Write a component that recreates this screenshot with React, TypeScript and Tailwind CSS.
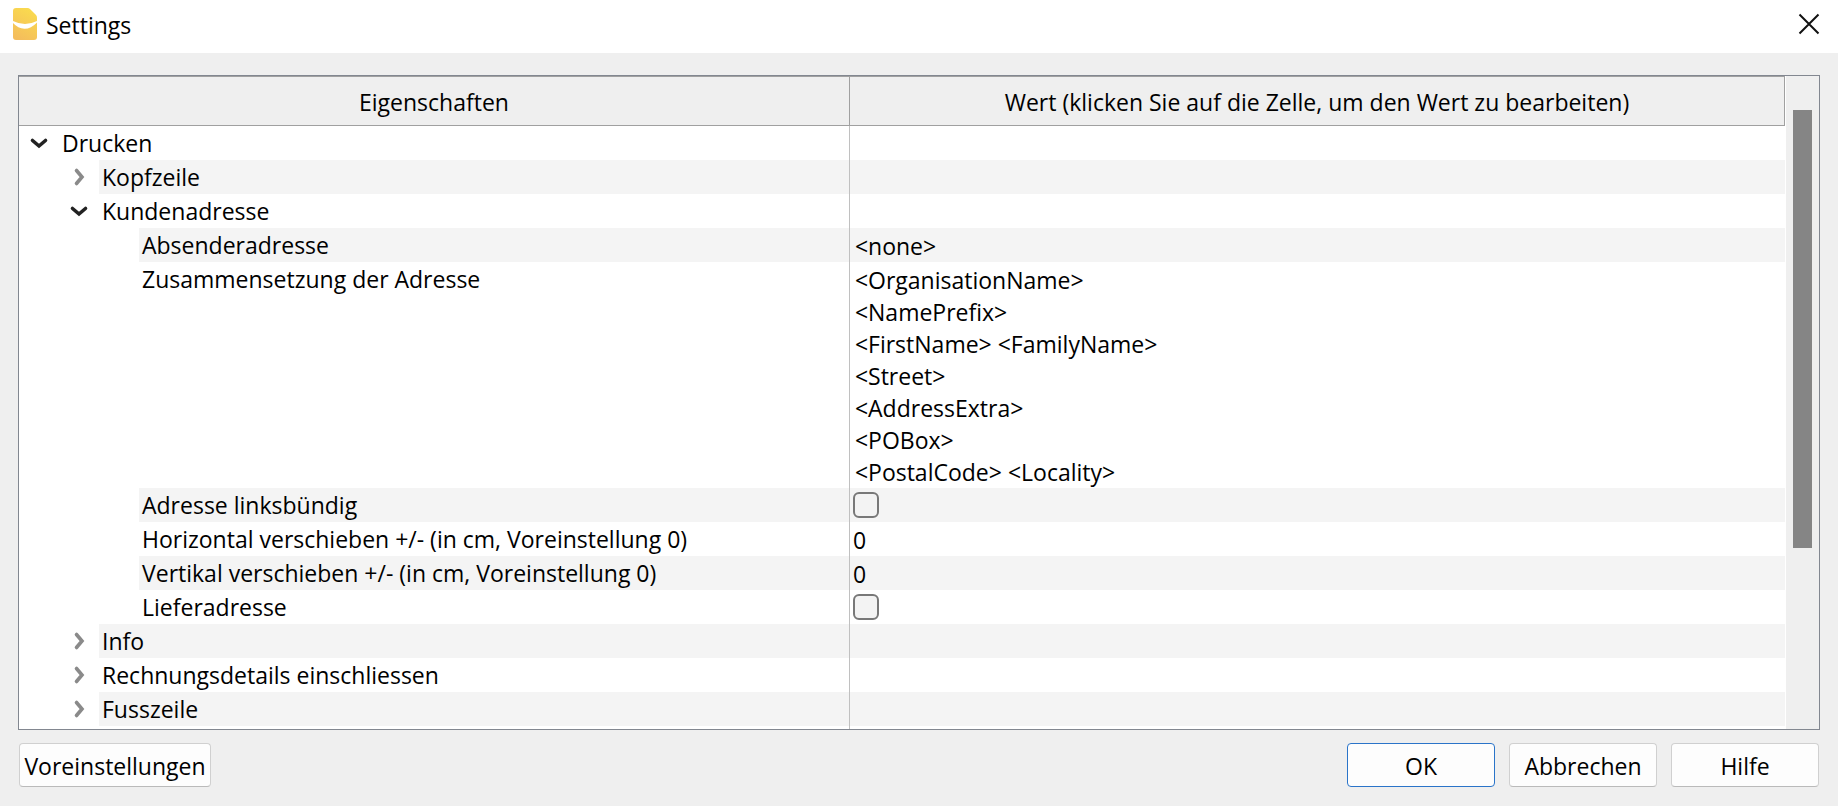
import { useState } from "react";

type Row = {
  id: string;
  level: 0 | 1 | 2;
  label: string;
  open?: boolean;
  lines?: string[];
  value?: string;
  checkbox?: boolean;
};

const rows: Row[] = [
  { id: "print", level: 0, label: "Drucken", open: true },
  { id: "header", level: 1, label: "Kopfzeile", open: false },
  { id: "address", level: 1, label: "Kundenadresse", open: true },
  { id: "sender", level: 2, label: "Absenderadresse", lines: ["<none>"] },
  {
    id: "composition",
    level: 2,
    label: "Zusammensetzung der Adresse",
    lines: [
      "<OrganisationName>",
      "<NamePrefix>",
      "<FirstName> <FamilyName>",
      "<Street>",
      "<AddressExtra>",
      "<POBox>",
      "<PostalCode> <Locality>",
    ],
  },
  { id: "left", level: 2, label: "Adresse linksbündig", checkbox: true },
  { id: "dx", level: 2, label: "Horizontal verschieben +/- (in cm, Voreinstellung 0)", value: "0" },
  { id: "dy", level: 2, label: "Vertikal verschieben +/- (in cm, Voreinstellung 0)", value: "0" },
  { id: "delivery", level: 2, label: "Lieferadresse", checkbox: true },
  { id: "info", level: 1, label: "Info", open: false },
  { id: "details", level: 1, label: "Rechnungsdetails einschliessen", open: false },
  { id: "footer", level: 1, label: "Fusszeile", open: false },
];

const indents = ["pl-0", "pl-10", "pl-20"];

function AppIcon() {
  return (
    <svg width="24" height="32" viewBox="0 0 24 32" aria-hidden="true">
      <defs>
        <linearGradient id="gold" x1="0.7" y1="0" x2="0.3" y2="1">
          <stop offset="0" stopColor="#fadb4e" />
          <stop offset="1" stopColor="#f4bd5c" />
        </linearGradient>
      </defs>
      <path d="M3 0H14.500Q16 0 17 1L23 7Q24 8 24 9.500V29a3 3 0 0 1-3 3H3a3 3 0 0 1-3-3V3a3 3 0 0 1 3-3Z" fill="url(#gold)" />
      <path d="M0 13Q12 19 24 13V14.500Q18 20.800 11.500 20.800Q5 20.500 0 15Z" fill="#fff" />
    </svg>
  );
}

function Chevron({ open }: { open: boolean }) {
  return (
    <svg width="40" height="34" viewBox="0 0 40 34" fill="none" strokeWidth="3.6" strokeLinecap="round" aria-hidden="true">
      {open ? (
        <path d="M13.500 14.500L20 20L26.500 14.500" stroke="#222" />
      ) : (
        <path d="M17.500 10.500L23 17L17.500 23.500" stroke="#8a8a8a" />
      )}
    </svg>
  );
}

function DialogButton({ children, primary = false }: { children: string; primary?: boolean }) {
  return (
    <button
      type="button"
      className={
        primary
          ? "h-11 w-[148px] rounded-[4px] border border-[#2a74c9] bg-[#fdfdfd] pt-[2px]"
          : "h-11 w-[148px] rounded-[4px] border border-[#d0d0d0] border-b-[#bababa] bg-[#fdfdfd] pt-[2px]"
      }
    >
      {children}
    </button>
  );
}

export default function App() {
  const [open, setOpen] = useState<Record<string, boolean>>(
    Object.fromEntries(rows.map((r) => [r.id, r.open ?? false])),
  );
  const visible = rows.filter(
    (r) => r.level === 0 || (open.print && (r.level === 1 || open.address)),
  );

  return (
    <div className="flex min-h-screen flex-col bg-[#efefef] font-['Open_Sans','Noto_Sans',sans-serif] text-[23px] leading-8 text-black">
      <header className="flex h-[53px] items-center justify-between bg-white pr-[18px] pb-[5px] pl-[13px]">
        <div className="flex items-center gap-[9px]">
          <AppIcon />
          <h1 className="pt-[2px]">Settings</h1>
        </div>
        <button type="button" aria-label="Schliessen">
          <svg width="22" height="22" viewBox="0 0 22 22" stroke="#111" strokeWidth="2" aria-hidden="true">
            <path d="M1.500 1.500L20.500 20.500M20.500 1.500L1.500 20.500" />
          </svg>
        </button>
      </header>

      <main className="flex flex-1 flex-col px-[18px] pt-[22px] pb-[19px]">
        <div className="flex flex-1 border border-[#828790] bg-white">
          <div className="min-w-0 flex-1">
            <table className="w-full table-fixed border-separate border-spacing-0">
              <colgroup>
                <col className="w-[47.05%]" />
                <col />
              </colgroup>
              <thead>
                <tr className="h-[50px] bg-[#efefef]">
                  <th className="border-y border-r border-[#a0a0a0] px-0 pt-[2px] pb-0 font-normal">Eigenschaften</th>
                  <th className="border-y border-r border-[#a0a0a0] px-0 pt-[2px] pb-0 font-normal">
                    Wert (klicken Sie auf die Zelle, um den Wert zu bearbeiten)
                  </th>
                </tr>
              </thead>
              <tbody>
                {visible.map((row, i) => {
                  const band = i % 2 === 1 ? "bg-[#f4f4f4]" : "bg-white";
                  return (
                    <tr key={row.id}>
                      <td className="border-r border-[#c0c0c0] p-0 align-top">
                        <div className={`flex ${indents[row.level]}`}>
                          {row.open === undefined ? (
                            <span className="w-10" />
                          ) : (
                            <button
                              type="button"
                              aria-label={row.label}
                              aria-expanded={open[row.id]}
                              onClick={() => setOpen({ ...open, [row.id]: !open[row.id] })}
                            >
                              <Chevron open={open[row.id]} />
                            </button>
                          )}
                          <label
                            htmlFor={row.checkbox ? row.id : undefined}
                            className={`h-[34px] flex-1 truncate pt-px pl-[3px] ${band}`}
                          >
                            {row.label}
                          </label>
                        </div>
                      </td>
                      <td className={`p-0 align-top ${band}`}>
                        {row.lines && (
                          <div className="pt-[2px] pl-[5px]">
                            {row.lines.map((line) => (
                              <div key={line}>{line}</div>
                            ))}
                          </div>
                        )}
                        {row.value && <div className="pt-[2px] pl-[3px]">{row.value}</div>}
                        {row.checkbox && (
                          <div className="flex h-[34px] items-center pl-[3px]">
                            <input
                              id={row.id}
                              type="checkbox"
                              className="size-[26px] appearance-none rounded-[6px] border-2 border-[#787878] bg-[#f3f3f3] checked:bg-[#2a74c9]"
                            />
                          </div>
                        )}
                      </td>
                    </tr>
                  );
                })}
                <tr className="h-[3px]" aria-hidden="true">
                  <td className="border-r border-[#c0c0c0] p-0" />
                  <td className="p-0" />
                </tr>
              </tbody>
            </table>
          </div>
          <div className="ml-px flex w-[33px] justify-center bg-[#efefef] pt-[34px]">
            <div className="h-[438px] w-[19px] bg-[#858585]" />
          </div>
        </div>

        <footer className="flex items-center justify-between px-px pt-[13px]">
          <button
            type="button"
            className="h-11 w-[192px] rounded-[4px] border border-[#d0d0d0] border-b-[#bababa] bg-[#fdfdfd] pt-[2px]"
          >
            Voreinstellungen
          </button>
          <div className="flex gap-[14px]">
            <DialogButton primary>OK</DialogButton>
            <DialogButton>Abbrechen</DialogButton>
            <DialogButton>Hilfe</DialogButton>
          </div>
        </footer>
      </main>
    </div>
  );
}
